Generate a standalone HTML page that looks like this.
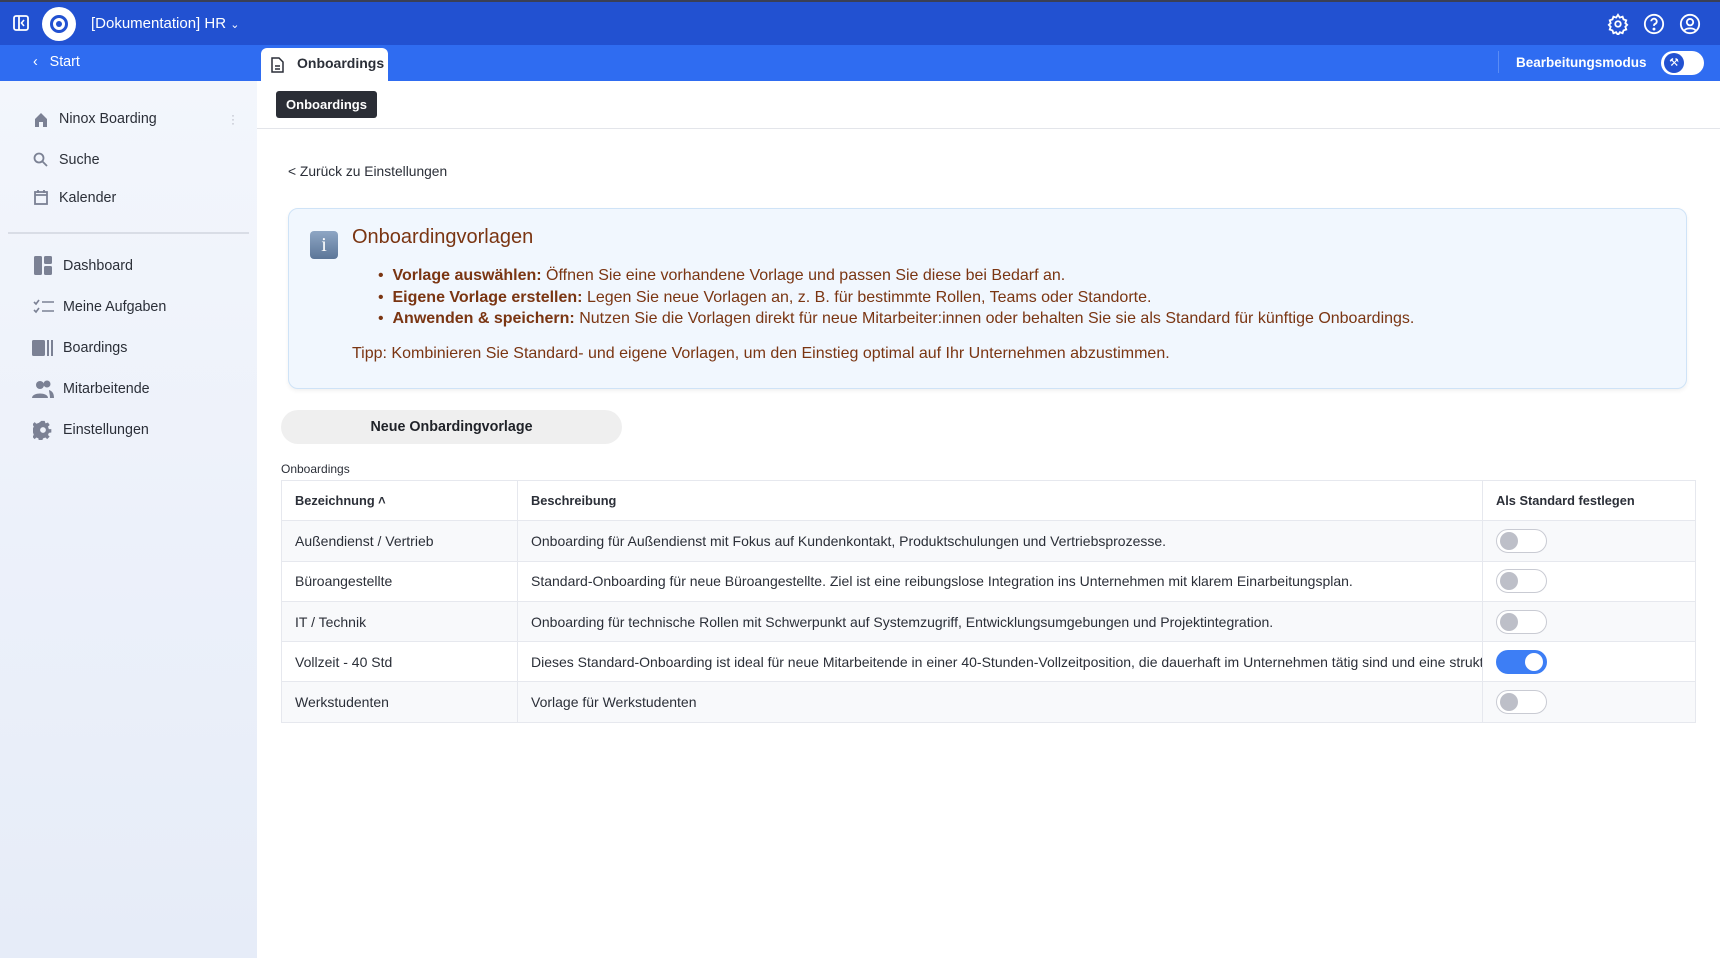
<!DOCTYPE html>
<html><head><meta charset="utf-8">
<style>
*{box-sizing:border-box;margin:0;padding:0}
body{width:1720px;height:958px;overflow:hidden;font-family:"Liberation Sans","DejaVu Sans",sans-serif;background:#fff;position:relative;color:#2b2f38}
.abs{position:absolute}
.top{left:0;top:0;width:1720px;height:45px;background:#2251d1;border-top:2px solid #3a3f55}
.sub{left:0;top:45px;width:1720px;height:36px;background:#2f6cf1}
.side{left:0;top:81px;width:257px;height:877px;background:linear-gradient(#f3f6fc,#e6ecf8)}
.si{position:absolute;font-size:14.3px;color:#2b2f38}
.tab{left:261px;top:48px;width:127px;height:33px;background:#fff;border-radius:6px 6px 0 0;font-size:14px;font-weight:bold;color:#2b2f38}
table{border-collapse:collapse;font-size:14px}
td{border:1px solid #e6e8ee;height:40.3px;padding:0 13px;white-space:nowrap;overflow:hidden}
.tog{width:51px;height:24px;border-radius:12px;border:1.5px solid #c9cbd3;background:#fff;position:relative}
.tog:after{content:"";position:absolute;left:3px;top:2px;width:18px;height:18px;border-radius:50%;background:#bdbfc8}
.tog.on{background:#3d7ef5;border-color:#3d7ef5}
.tog.on:after{left:auto;right:3px;background:#fff}
.info{color:#7a3512}
</style></head><body>
<div class="abs top">
 <svg class="abs" style="left:13px;top:13px" width="16" height="16" viewBox="0 0 16 16"><rect x="1" y="1" width="14" height="14" rx="2" fill="none" stroke="#fff" stroke-width="1.8"/><line x1="6" y1="1" x2="6" y2="15" stroke="#fff" stroke-width="1.8"/><path d="M11 5l-2.5 3 2.5 3" fill="none" stroke="#fff" stroke-width="1.6"/></svg>
 <div class="abs" style="left:42px;top:5px;width:34px;height:34px;border-radius:50%;background:#fff"></div>
 <div class="abs" style="left:50px;top:13px;width:18px;height:18px;border-radius:50%;border:3px solid #2251d1"></div>
 <div class="abs" style="left:56px;top:19px;width:6px;height:6px;border-radius:50%;background:#2251d1"></div>
 <div class="abs" style="left:91px;top:13px;color:#fff;font-size:15px">[Dokumentation] HR <span style="font-size:11px">&#8964;</span></div>
 <svg class="abs" style="left:1607px;top:11px" width="22" height="22" viewBox="0 0 24 24" fill="none" stroke="#fff" stroke-width="2"><circle cx="12" cy="12" r="3"/><path d="M12 2l2 3 3-1 1 3 3 1-1 3 2 2-2 2 1 3-3 1-1 3-3-1-2 3-2-3-3 1-1-3-3-1 1-3-2-2 2-2-1-3 3-1 1-3 3 1z"/></svg>
 <svg class="abs" style="left:1643px;top:11px" width="22" height="22" viewBox="0 0 24 24" fill="none" stroke="#fff" stroke-width="2"><circle cx="12" cy="12" r="10"/><path d="M9 9a3 3 0 1 1 4 3c-1 .5-1 1-1 2"/><circle cx="12" cy="17.5" r=".6" fill="#fff"/></svg>
 <svg class="abs" style="left:1679px;top:11px" width="22" height="22" viewBox="0 0 24 24" fill="none" stroke="#fff" stroke-width="2"><circle cx="12" cy="12" r="10"/><circle cx="12" cy="10" r="3.5"/><path d="M6 19c2-3 10-3 12 0"/></svg>
</div>
<div class="abs sub">
 <div class="abs" style="left:33px;top:9px;color:#fff;font-size:14.3px">&#8249;&nbsp;&nbsp; Start</div>
 <div class="abs" style="left:1498px;top:6px;width:1px;height:22px;background:#5a8cf5"></div>
 <div class="abs" style="left:1516px;top:10px;color:#fff;font-size:13.5px;font-weight:bold">Bearbeitungsmodus</div>
 <div class="abs" style="left:1661px;top:6px;width:43px;height:24px;border-radius:12px;background:#fff"></div>
 <div class="abs" style="left:1664px;top:8px;width:20px;height:20px;border-radius:50%;background:#2251d1;color:#fff;font-size:11px;text-align:center;line-height:20px">&#9874;</div>
</div>
<div class="abs tab"><svg class="abs" style="left:10px;top:9px" width="13" height="16" viewBox="0 0 13 16" fill="none" stroke="#2b2f38" stroke-width="1.5"><path d="M1 1h7l4 4v10H1z"/><path d="M4 9h5M4 12h5"/></svg><span class="abs" style="left:36px;top:7px">Onboardings</span></div>
<div class="abs side">
 <div class="abs" style="left:8px;top:151px;width:241px;height:2px;background:#d9dde6"></div>
</div>
<svg class="abs" style="left:34px;top:112px" width="14" height="15" viewBox="0 0 14 15"><path d="M1 7L7 1l6 6v8H9v-5H5v5H1z" fill="#7b8194"/></svg>
<div class="si" style="left:59px;top:111px">Ninox Boarding</div>
<div class="abs" style="left:231px;top:113px;color:#b0b4bf;font-size:12px;line-height:4px">·<br>·<br>·</div>
<svg class="abs" style="left:33px;top:152px" width="16" height="16" viewBox="0 0 16 16" fill="none" stroke="#7b8194" stroke-width="1.8"><circle cx="6" cy="6" r="4.5"/><path d="M9.5 9.5L14 14"/></svg>
<div class="si" style="left:59px;top:152px">Suche</div>
<svg class="abs" style="left:34px;top:189px" width="14" height="16" viewBox="0 0 14 16" fill="none" stroke="#7b8194" stroke-width="1.8"><rect x="1" y="3" width="12" height="12"/><path d="M1 6h12M4 1v3M10 1v3"/></svg>
<div class="si" style="left:59px;top:190px">Kalender</div>
<svg class="abs" style="left:34px;top:256px" width="18" height="19" viewBox="0 0 18 19" fill="#7b8194"><rect x="0" y="0" width="8" height="19" rx="1.5"/><rect x="10" y="0" width="8" height="8" rx="1.5"/><rect x="10" y="10" width="8" height="9" rx="1.5"/></svg>
<div class="si" style="left:63px;top:258px">Dashboard</div>
<svg class="abs" style="left:33px;top:299px" width="21" height="15" viewBox="0 0 21 15" fill="none" stroke="#7b8194" stroke-width="1.6"><path d="M1 3l2 2 3-4M1 11l2 2 3-4M9 3h12M9 12h12"/></svg>
<div class="si" style="left:63px;top:299px">Meine Aufgaben</div>
<svg class="abs" style="left:32px;top:340px" width="22" height="16" viewBox="0 0 22 16" fill="#7b8194"><rect x="0" y="0" width="13" height="16" rx="1.5"/><rect x="15" y="0" width="2" height="16"/><rect x="19" y="0" width="2" height="16"/></svg>
<div class="si" style="left:63px;top:340px">Boardings</div>
<svg class="abs" style="left:32px;top:380px" width="22" height="18" viewBox="0 0 22 18" fill="#7b8194"><circle cx="8" cy="5" r="4"/><path d="M0 18c0-6 16-6 16 0z"/><circle cx="15" cy="4" r="3.5"/><path d="M17 10c3 1 5 3 5 8h-4c0-3-1-6-1-8z"/></svg>
<div class="si" style="left:63px;top:381px">Mitarbeitende</div>
<svg class="abs" style="left:33px;top:420px" width="20" height="20" viewBox="0 0 24 24" fill="#7b8194"><path d="M10 1h4l1 3 3-1 2 3-2 2 1 3h3v4l-3 .5-1 2.5 2 2-3 3-2-2-3 1-1 3h-4l-.5-3-2.5-1-2 2-3-3 2-2-1-3-3-.5v-4l3-.5 1-2.5-2-2 3-3 2 2 3-1z"/><circle cx="12" cy="12" r="3.5" fill="#eef2fa"/></svg>
<div class="si" style="left:63px;top:422px">Einstellungen</div>

<div class="abs" style="left:257px;top:128px;width:1463px;height:1px;background:#e3e5ea"></div>
<div class="abs" style="left:276px;top:91px;width:101px;height:27px;background:#2b2e36;border-radius:3px;color:#fff;font-size:13px;font-weight:bold;text-align:center;line-height:27px">Onboardings</div>
<div class="abs" style="left:288px;top:164px;font-size:13.8px">&lt; Zurück zu Einstellungen</div>

<div class="abs" style="left:288px;top:208px;width:1399px;height:181px;background:#f1f7fe;border:1.5px solid #cfe3f7;border-radius:10px;box-shadow:0 2px 4px rgba(0,0,0,.06)"></div>
<div class="abs" style="left:310px;top:231px;width:28px;height:28px;border-radius:4px;background:linear-gradient(#8ea6c4,#5c7698);color:#fff;font-size:20px;text-align:center;line-height:28px;font-family:'Liberation Serif',serif">i</div>
<div class="abs info" style="left:352px;top:226px;font-size:20px">Onboardingvorlagen</div>
<div class="abs info" style="left:378px;top:265px;font-size:16px;line-height:21.5px">
<div>•&nbsp; <b>Vorlage auswählen:</b> Öffnen Sie eine vorhandene Vorlage und passen Sie diese bei Bedarf an.</div>
<div>•&nbsp; <b>Eigene Vorlage erstellen:</b> Legen Sie neue Vorlagen an, z. B. für bestimmte Rollen, Teams oder Standorte.</div>
<div>•&nbsp; <b>Anwenden &amp; speichern:</b> Nutzen Sie die Vorlagen direkt für neue Mitarbeiter:innen oder behalten Sie sie als Standard für künftige Onboardings.</div>
</div>
<div class="abs info" style="left:352px;top:345px;font-size:16px">Tipp: Kombinieren Sie Standard- und eigene Vorlagen, um den Einstieg optimal auf Ihr Unternehmen abzustimmen.</div>

<div class="abs" style="left:281px;top:410px;width:341px;height:34px;border-radius:17px;background:#efefef;font-size:14.3px;font-weight:bold;text-align:center;line-height:34px;color:#1f2228">Neue Onbardingvorlage</div>
<div class="abs" style="left:281px;top:462px;font-size:12px">Onboardings</div>

<table class="abs" style="left:281px;top:480px;width:1414px;table-layout:fixed">
<colgroup><col style="width:236px"><col style="width:965px"><col style="width:213px"></colgroup>
<tr style="font-weight:bold;font-size:12.8px"><td>Bezeichnung ˄</td><td>Beschreibung</td><td>Als Standard festlegen</td></tr>
<tr style="background:#f8f9fb"><td>Außendienst / Vertrieb</td><td>Onboarding für Außendienst mit Fokus auf Kundenkontakt, Produktschulungen und Vertriebsprozesse.</td><td><div class="tog"></div></td></tr>
<tr><td>Büroangestellte</td><td>Standard-Onboarding für neue Büroangestellte. Ziel ist eine reibungslose Integration ins Unternehmen mit klarem Einarbeitungsplan.</td><td><div class="tog"></div></td></tr>
<tr style="background:#f8f9fb"><td>IT / Technik</td><td>Onboarding für technische Rollen mit Schwerpunkt auf Systemzugriff, Entwicklungsumgebungen und Projektintegration.</td><td><div class="tog"></div></td></tr>
<tr><td>Vollzeit - 40 Std</td><td style="text-overflow:clip">Dieses Standard-Onboarding ist ideal für neue Mitarbeitende in einer 40-Stunden-Vollzeitposition, die dauerhaft im Unternehmen tätig sind und eine strukturierte Einarbeitung benötigen.</td><td><div class="tog on"></div></td></tr>
<tr style="background:#f8f9fb"><td>Werkstudenten</td><td>Vorlage für Werkstudenten</td><td><div class="tog"></div></td></tr>
</table>
</body></html>
